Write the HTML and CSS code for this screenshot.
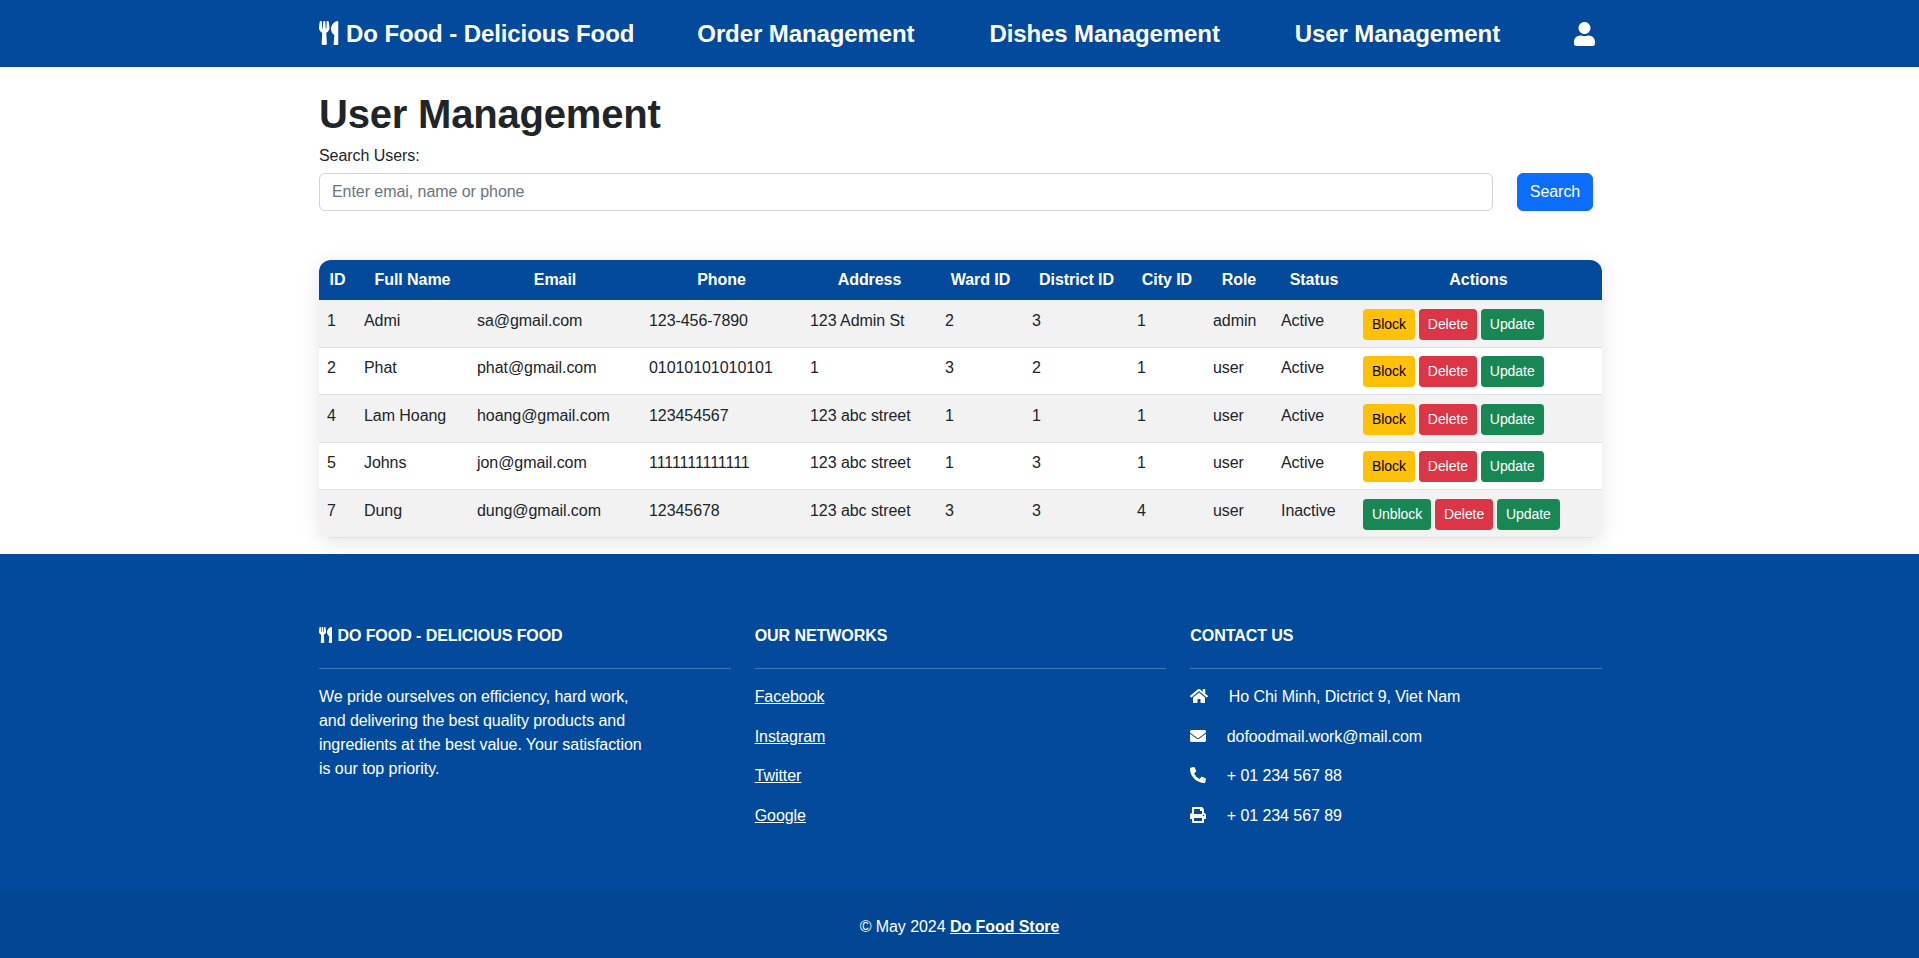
FILE: index.html
```html
<!DOCTYPE html>
<html>
	<head>
		<meta charset="utf-8">
		<title>User Management</title>
		<link rel="stylesheet" href="styles.css">
	</head>
	<body>
	<svg class="defs" xmlns="http://www.w3.org/2000/svg">
		<symbol id="i-utensils" viewBox="0 0 416 512"><path d="M207.9 15.2c.8 4.7 16.1 94.5 16.1 128.8 0 52.3-27.8 89.6-68.9 104.6L168 486.7c.7 13.7-10.2 25.3-24 25.3H80c-13.7 0-24.7-11.5-24-25.3l12.9-238.1C27.7 233.6 0 196.2 0 144 0 109.6 15.3 19.9 16.1 15.2 19.3-5.1 61.4-5.4 64 16.3v141.2c1.3 3.4 15.1 3.2 16 0 1.4-25.3 7.9-139.2 8-141.8 3.3-20.8 44.7-20.8 47.9 0 .2 2.7 6.6 116.5 8 141.8.9 3.2 14.8 3.4 16 0V16.3c2.6-21.6 44.8-21.4 48-1.1zm119.2 285.7l-15 185.1c-1.2 14 9.9 26 23.9 26h56c13.3 0 24-10.7 24-24V24c0-13.3-10.7-24-24-24-82.5 0-221.4 178.5-64.9 300.9z"/></symbol>
		<symbol id="i-user" viewBox="0 0 448 512"><path d="M224 256c70.7 0 128-57.3 128-128S294.7 0 224 0 96 57.3 96 128s57.3 128 128 128zm89.6 32h-16.7c-22.2 10.2-46.9 16-72.9 16s-50.6-5.8-72.9-16h-16.7C60.2 288 0 348.2 0 422.4V464c0 26.5 21.5 48 48 48h352c26.5 0 48-21.5 48-48v-41.6c0-74.2-60.2-134.4-134.4-134.4z"/></symbol>
		<symbol id="i-home" viewBox="0 0 576 512"><path d="M280.37 148.26L96 300.11V464a16 16 0 0 0 16 16l112.06-.29a16 16 0 0 0 15.92-16V368a16 16 0 0 1 16-16h64a16 16 0 0 1 16 16v95.64a16 16 0 0 0 16 16.05L464 480a16 16 0 0 0 16-16V300L295.67 148.26a12.19 12.19 0 0 0-15.3 0zM571.6 251.47L488 182.56V44.05a12 12 0 0 0-12-12h-56a12 12 0 0 0-12 12v72.61L318.47 43a48 48 0 0 0-61 0L4.34 251.47a12 12 0 0 0-1.6 16.9l25.5 31A12 12 0 0 0 45.15 301l235.22-193.74a12.19 12.19 0 0 1 15.3 0L530.9 301a12 12 0 0 0 16.9-1.6l25.5-31a12 12 0 0 0-1.7-16.93z"/></symbol>
		<symbol id="i-envelope" viewBox="0 0 512 512"><path d="M502.3 190.8c3.9-3.1 9.7-.2 9.7 4.7V400c0 26.5-21.5 48-48 48H48c-26.5 0-48-21.5-48-48V195.6c0-5 5.7-7.8 9.7-4.7 22.4 17.4 52.1 39.5 154.1 113.6 21.1 15.4 56.7 47.8 92.2 47.6 35.7.3 72-32.8 92.3-47.6 102-74.1 131.6-96.3 154-113.7zM256 320c23.2.4 56.6-29.2 73.4-41.4 132.7-96.3 142.8-104.7 173.4-128.7 5.8-4.5 9.2-11.5 9.2-18.9v-19c0-26.5-21.5-48-48-48H48C21.5 64 0 85.5 0 112v19c0 7.4 3.4 14.3 9.2 18.9 30.6 23.9 40.7 32.4 173.4 128.7 16.8 12.2 50.2 41.8 73.4 41.4z"/></symbol>
		<symbol id="i-phone" viewBox="0 0 512 512"><path d="M497.39 361.8l-112-48a24 24 0 0 0-28 6.9l-49.6 60.6A370.66 370.66 0 0 1 130.6 204.11l60.6-49.6a23.94 23.94 0 0 0 6.9-28l-48-112A24.16 24.16 0 0 0 122.6.61l-104 24A24 24 0 0 0 0 48c0 256.5 207.9 464 464 464a24 24 0 0 0 23.4-18.6l24-104a24.29 24.29 0 0 0-14.01-27.6z"/></symbol>
		<symbol id="i-print" viewBox="0 0 512 512"><path d="M448 192V77.25c0-8.49-3.37-16.62-9.37-22.63L393.37 9.37c-6-6-14.14-9.37-22.63-9.37H96C78.33 0 64 14.33 64 32v160c-35.35 0-64 28.65-64 64v112c0 8.84 7.16 16 16 16h48v96c0 17.67 14.33 32 32 32h320c17.67 0 32-14.33 32-32v-96h48c8.84 0 16-7.16 16-16V256c0-35.35-28.65-64-64-64zm-64 256H128v-96h256v96zm0-224H128V64h192v48c0 8.84 7.16 16 16 16h48v96zm48 72c-13.25 0-24-10.75-24-24 0-13.26 10.75-24 24-24s24 10.74 24 24c0 13.25-10.75 24-24 24z"/></symbol>
	</svg>

	<header class="topbar">
		<div class="wrap topbar-in">
			<a class="brand" href="#"><svg class="ico w-utensils"><use href="#i-utensils"/></svg> Do Food - Delicious Food</a>
			<ul class="menu">
				<li><a href="#">Order Management</a></li>
				<li><a href="#">Dishes Management</a></li>
				<li><a href="#">User Management</a></li>
			</ul>
			<a class="account" href="#"><svg class="ico"><use href="#i-user"/></svg></a>
		</div>
	</header>

	<main class="wrap content">
		<h1>User Management</h1>
		<label class="search-label" for="search">Search Users:</label>
		<form class="search">
			<input id="search" type="text" placeholder="Enter emai, name or phone">
			<button class="btn-search" type="button">Search</button>
		</form>

		<div class="table-box">
			<table>
				<colgroup>
					<col class="c-id"><col class="c-name"><col class="c-email"><col class="c-phone"><col class="c-addr"><col class="c-ward"><col class="c-dist"><col class="c-city"><col class="c-role"><col class="c-status"><col class="c-act">
				</colgroup>
				<thead>
					<tr><th>ID</th><th>Full Name</th><th>Email</th><th>Phone</th><th>Address</th><th>Ward ID</th><th>District ID</th><th>City ID</th><th>Role</th><th>Status</th><th>Actions</th></tr>
				</thead>
				<tbody>
					<tr>
						<td>1</td><td>Admi</td><td>sa@gmail.com</td><td>123-456-7890</td><td>123 Admin St</td><td>2</td><td>3</td><td>1</td><td>admin</td><td>Active</td>
						<td class="actions">
							<button class="btn yellow">Block</button>
							<button class="btn red">Delete</button>
							<button class="btn green">Update</button>
						</td>
					</tr>
					<tr>
						<td>2</td><td>Phat</td><td>phat@gmail.com</td><td>01010101010101</td><td>1</td><td>3</td><td>2</td><td>1</td><td>user</td><td>Active</td>
						<td class="actions">
							<button class="btn yellow">Block</button>
							<button class="btn red">Delete</button>
							<button class="btn green">Update</button>
						</td>
					</tr>
					<tr>
						<td>4</td><td>Lam Hoang</td><td>hoang@gmail.com</td><td>123454567</td><td>123 abc street</td><td>1</td><td>1</td><td>1</td><td>user</td><td>Active</td>
						<td class="actions">
							<button class="btn yellow">Block</button>
							<button class="btn red">Delete</button>
							<button class="btn green">Update</button>
						</td>
					</tr>
					<tr>
						<td>5</td><td>Johns</td><td>jon@gmail.com</td><td>1111111111111</td><td>123 abc street</td><td>1</td><td>3</td><td>1</td><td>user</td><td>Active</td>
						<td class="actions">
							<button class="btn yellow">Block</button>
							<button class="btn red">Delete</button>
							<button class="btn green">Update</button>
						</td>
					</tr>
					<tr>
						<td>7</td><td>Dung</td><td>dung@gmail.com</td><td>12345678</td><td>123 abc street</td><td>3</td><td>3</td><td>4</td><td>user</td><td>Inactive</td>
						<td class="actions">
							<button class="btn green">Unblock</button>
							<button class="btn red">Delete</button>
							<button class="btn green">Update</button>
						</td>
					</tr>
				</tbody>
			</table>
		</div>
	</main>

	<footer class="foot">
		<div class="wrap foot-cols">
			<section>
				<h6><svg class="ico w-utensils"><use href="#i-utensils"/></svg> Do Food - Delicious Food</h6>
				<hr>
				<p class="about">We pride ourselves on efficiency, hard work, and delivering the best quality products and ingredients at the best value. Your satisfaction is our top priority.</p>
			</section>
			<section>
				<h6>Our networks</h6>
				<hr>
				<p><a href="#">Facebook</a></p>
				<p><a href="#">Instagram</a></p>
				<p><a href="#">Twitter</a></p>
				<p><a href="#">Google</a></p>
			</section>
			<section>
				<h6>Contact us</h6>
				<hr>
				<p><svg class="ico gap w-home"><use href="#i-home"/></svg> Ho Chi Minh, Dictrict 9, Viet Nam</p>
				<p><svg class="ico gap"><use href="#i-envelope"/></svg> dofoodmail.work@mail.com</p>
				<p><svg class="ico gap"><use href="#i-phone"/></svg> + 01 234 567 88</p>
				<p><svg class="ico gap"><use href="#i-print"/></svg> + 01 234 567 89</p>
			</section>
		</div>
		<div class="copy">&copy; May 2024 <a href="#">Do Food Store</a></div>
	</footer>
	</body>
</html>
```

FILE: styles.css
```css
* {margin: 0;padding: 0;box-sizing: border-box;}
li {list-style: none;}
body {
	font-family: "Liberation Sans", Arial, sans-serif;
	font-size: 16px;
	line-height: 24px;
	letter-spacing: -0.06px;
	color: #212529;
	background: #fff;
}
input, button {letter-spacing: inherit;}
a {color: inherit;}
.defs {display: none;}
.wrap {
	width: 1283px;
	margin-left: 319px;
}
.ico {
	display: inline-block;
	width: 1em;
	height: 1em;
	vertical-align: -0.125em;
	fill: currentColor;
}
.w-utensils {width: 0.8125em;margin-right: 1px;}
.w-home {width: 1.125em;}

/* top bar */
.topbar {
	height: 67px;
	background: #034a9c;
	color: #fff;
}
.topbar-in {
	height: 67px;
	display: flex;
	align-items: center;
	font-size: 24px;
	font-weight: bold;
	white-space: nowrap;
	letter-spacing: -0.1px;
}
.topbar a {text-decoration: none;}
.menu {
	display: flex;
	gap: 75px;
	margin-left: 63px;
}
.account {
	margin-left: 74px;
	display: flex;
}
.account .ico {width: 21px;height: 24px;}

/* search */
.content {padding-top: 23px;}
h1 {
	font-size: 40px;
	line-height: 48px;
	font-weight: bold;
	letter-spacing: -0.2px;
	margin-bottom: 6px;
}
.search-label {display: block;}
.search {
	display: flex;
	gap: 24px;
	margin-top: 5px;
	padding-right: 9px;
}
.search input {
	flex: 1;
	height: 38px;
	padding: 6px 12px;
	border: 1px solid #ced4da;
	border-radius: 6px;
	font: inherit;
	color: #212529;
}
.search input::placeholder {color: #6c757d;}
.btn-search {
	width: 76px;
	height: 38px;
	border: 1px solid #0d6efd;
	border-radius: 6px;
	background: #0d6efd;
	color: #fff;
	font: inherit;
}

/* table */
.table-box {
	margin-top: 49px;
	border-radius: 12px;
	overflow: hidden;
	box-shadow: 0 4px 20px rgba(0,0,0,0.1);
}
table {
	width: 100%;
	table-layout: fixed;
	border-collapse: separate;
	border-spacing: 0;
}
.c-id {width: 37px;}
.c-name {width: 113px;}
.c-email {width: 172px;}
.c-phone {width: 161px;}
.c-addr {width: 135px;}
.c-ward {width: 87px;}
.c-dist {width: 105px;}
.c-city {width: 76px;}
.c-role {width: 68px;}
.c-status {width: 82px;}
.c-act {width: 247px;}
th {
	height: 40px;
	padding: 8px;
	background: #034a9c;
	color: #fff;
	font-weight: bold;
	text-align: center;
	white-space: nowrap;
}
td {
	padding: 9px 8px 7px;
	vertical-align: top;
	border-bottom: 1px solid #dee2e6;
	white-space: nowrap;
}
td.actions {
	padding: 9px 8px 7px;
	word-spacing: -0.5px;
}
/* rows alternate 48 / 47 tall */
tbody tr:nth-child(even) td {padding-top: 8px;}
tbody tr:nth-child(odd) td {background: #f2f2f2;}
.btn {
	display: inline-block;
	vertical-align: top;
	padding: 4px 8px;
	font-family: inherit;
	font-size: 14px;
	line-height: 21px;
	border: 1px solid transparent;
	border-radius: 3.2px;
	color: #fff;
}
.yellow {background: #ffc107;border-color: #ffc107;color: #000;}
.red {background: #dc3545;border-color: #dc3545;}
.green {background: #198754;border-color: #198754;}

/* footer */
.foot {
	margin-top: 16px;
	height: 404px;
	background: #034a9c;
	color: #fff;
	padding-top: 70px;
}
.foot-cols {
	display: grid;
	grid-template-columns: repeat(3, 1fr);
	gap: 24px;
	height: 268px;
}
h6 {
	font-size: 16px;
	line-height: 24px;
	font-weight: bold;
	text-transform: uppercase;
}
hr {
	margin: 20px 0 16px;
	border: 0;
	border-top: 1px solid rgba(255,255,255,0.25);
}
.foot p {margin-bottom: 15.67px;}
.foot .about {max-width: 330px;}
.ico.gap {margin-right: 16px;}
.copy {
	padding: 23px 0 19px;
	text-align: center;
	background: rgba(0,0,0,0.05);
}
.copy a {font-weight: bold;}
```
